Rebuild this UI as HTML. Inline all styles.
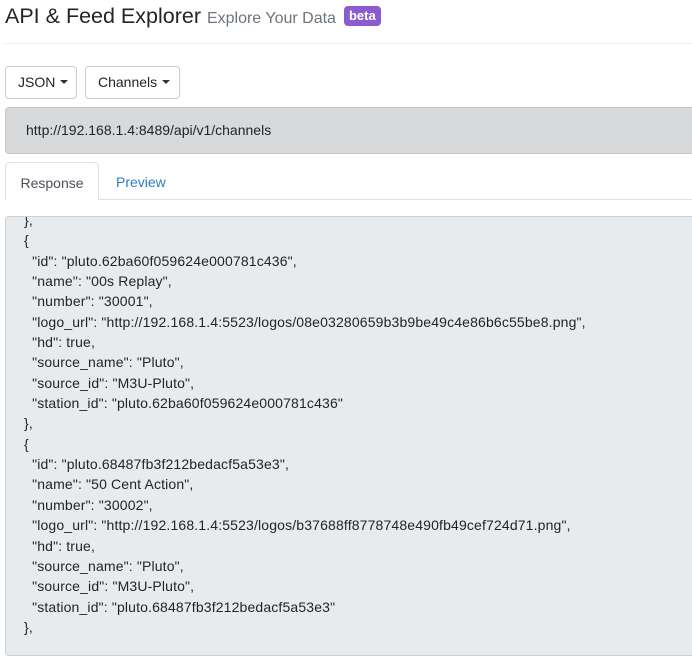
<!DOCTYPE html>
<html><head><style>
body{margin:0;width:692px;height:644px;overflow:hidden;background:#fff;font-family:"Liberation Sans",sans-serif;color:#212529;position:relative}
.a{position:absolute}
h1{position:absolute;left:5px;top:4px;margin:0;font-size:21.5px;font-weight:400;white-space:nowrap}
h1 small{font-size:16px;color:#6c757d}
.badge{display:inline-block;background:#8a5cd0;color:#fff;font-size:13px;font-weight:700;padding:2px 5px 3px;border-radius:4px;vertical-align:3px;margin-left:8px}
.hr{left:5px;right:0;top:43px;height:1px;background:#e9ecef}
.btn{top:66px;border:1px solid #ccc;border-radius:4px;font-size:14px;line-height:31px;box-sizing:border-box;height:33px;padding-left:12px}
.car{display:inline-block;border-left:4px solid transparent;border-right:4px solid transparent;border-top:4px solid #333;vertical-align:3px;margin-left:5px}
.url{left:5px;top:107px;width:700px;height:47px;box-sizing:border-box;background:#d8d9db;border:1px solid #c4c6c9;border-radius:4px;font-size:14px;line-height:45px;padding-left:20px}
.tabline{left:5px;right:0;top:199px;height:1px;background:#dee2e6}
.tab{left:5px;top:162px;width:94px;height:38px;box-sizing:border-box;border:1px solid #dee2e6;border-bottom:none;background:#fff;border-radius:4px 4px 0 0;font-size:14px;line-height:40px;text-align:center;color:#495057}
.prev{left:116px;top:163px;font-size:14px;line-height:38px;color:#2f7cc4}
.pre{left:5px;top:216px;width:700px;height:440px;box-sizing:border-box;background:#e8ebee;border:1px solid #cdd1d5;border-radius:4px;overflow:hidden}
.code{position:absolute;left:18px;top:-7px;font-size:14px;letter-spacing:0.15px;line-height:20.35px;white-space:pre;color:#212529}
</style></head><body>
<h1>API &amp; Feed Explorer <small>Explore Your Data</small><span class="badge">beta</span></h1>
<div class="a hr"></div>
<div class="a btn" style="left:5px;width:72px">JSON<span class="car"></span></div>
<div class="a btn" style="left:85px;width:95px">Channels<span class="car"></span></div>
<div class="a url">http://192.168.1.4:8489/api/v1/channels</div>
<div class="a tabline"></div>
<div class="a tab">Response</div>
<div class="a prev">Preview</div>
<div class="a pre"><div class="code">},
{
  "id": "pluto.62ba60f059624e000781c436",
  "name": "00s Replay",
  "number": "30001",
  "logo_url": "http://192.168.1.4:5523/logos/08e03280659b3b9be49c4e86b6c55be8.png",
  "hd": true,
  "source_name": "Pluto",
  "source_id": "M3U-Pluto",
  "station_id": "pluto.62ba60f059624e000781c436"
},
{
  "id": "pluto.68487fb3f212bedacf5a53e3",
  "name": "50 Cent Action",
  "number": "30002",
  "logo_url": "http://192.168.1.4:5523/logos/b37688ff8778748e490fb49cef724d71.png",
  "hd": true,
  "source_name": "Pluto",
  "source_id": "M3U-Pluto",
  "station_id": "pluto.68487fb3f212bedacf5a53e3"
},</div></div>
</body></html>
